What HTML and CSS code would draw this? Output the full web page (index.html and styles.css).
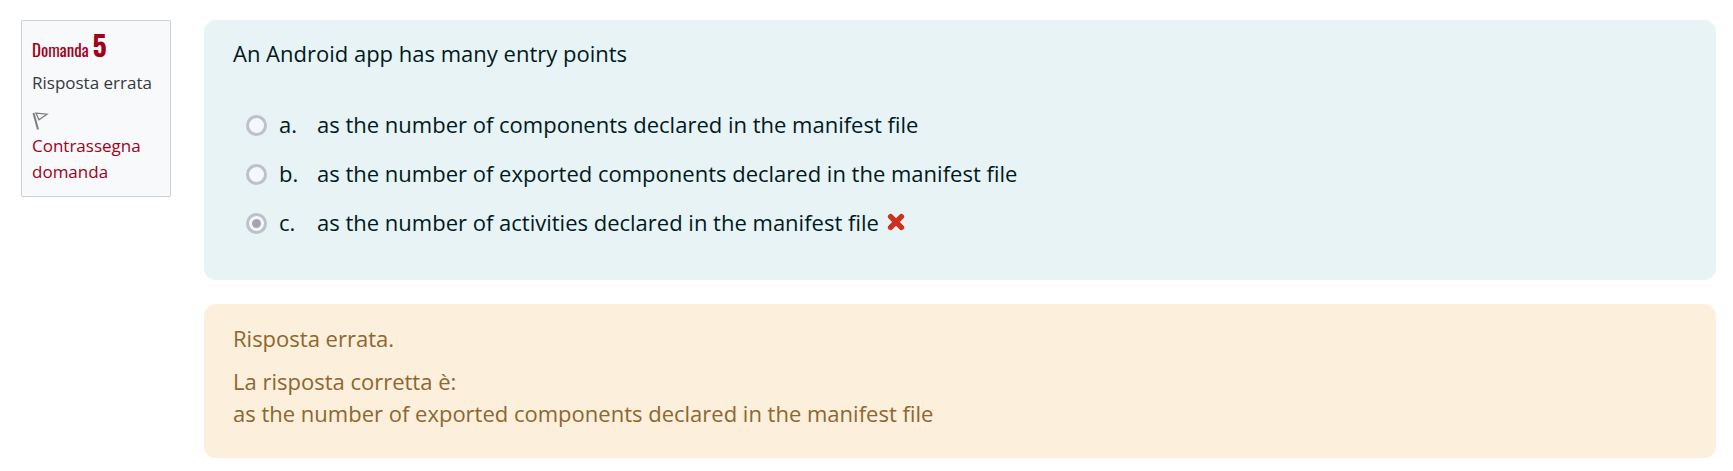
FILE: index.html
```html
<!DOCTYPE html>
<html lang="it">
<head>
<meta charset="utf-8">
<title>Domanda 5</title>
<link rel="stylesheet" href="styles.css">
</head>
<body>
<main class="question">
  <aside class="info">
    <h3 class="info-title">Domanda <span class="info-number">5</span></h3>
    <div class="info-state">Risposta errata</div>
    <a class="info-flag" href="#">
      <svg class="flag-icon" viewBox="0 0 18 18" aria-hidden="true">
        <path d="M1.5 1 L6 17.5" stroke="#7d7d7d" stroke-width="2"/>
        <path d="M4 1.2 L15 2.2 L7 7.8 Z" stroke="#7d7d7d" stroke-width="1.3"/>
      </svg>
      <span>Contrassegna domanda</span>
    </a>
  </aside>
  <div class="content">
    <section class="card formulation">
      <p class="prompt">An Android app has many entry points</p>
      <div class="answers">
        <div class="answer">
          <input class="radio" type="radio" name="answer" id="answer-a" disabled>
          <label class="answer-label" for="answer-a"><span class="letter">a.</span><span>as the number of components declared in the manifest file</span></label>
        </div>
        <div class="answer">
          <input class="radio" type="radio" name="answer" id="answer-b" disabled>
          <label class="answer-label" for="answer-b"><span class="letter">b.</span><span>as the number of exported components declared in the manifest file</span></label>
        </div>
        <div class="answer">
          <input class="radio" type="radio" name="answer" id="answer-c" checked disabled>
          <label class="answer-label" for="answer-c"><span class="letter">c.</span><span>as the number of activities declared in the manifest file</span>
            <svg class="wrong-icon" viewBox="0 0 18 18" aria-hidden="true">
              <path d="M4 4 L14 14 M14 4 L4 14" stroke="#ca3120" stroke-width="4.4" stroke-linecap="square"/>
              <path d="M3.6 3.6 L14.4 14.4 M14.4 3.6 L3.6 14.4" stroke="#ca3120" stroke-width="5.4" stroke-linecap="round"/>
            </svg>
          </label>
        </div>
      </div>
    </section>
    <section class="card feedback">
      <p class="feedback-text">Risposta errata.</p>
      <p class="feedback-text">La risposta corretta è:<br>as the number of exported components declared in the manifest file</p>
    </section>
  </div>
</main>
</body>
</html>
```
FILE: styles.css
```css
* {
  box-sizing: border-box;
}

body {
  margin: 0;
  background: #fff;
  font-family: "Open Sans", sans-serif;
  font-size: 22px;
  line-height: 32px;
}

p,
h3 {
  margin: 0;
}

.question {
  display: flex;
  align-items: flex-start;
  gap: 33px;
  padding: 20px 17px 13px 21px;
}

.info {
  flex: 0 0 150px;
  padding: 8px 10px 11px;
  border: 1px solid #cad0d7;
  border-radius: 2px;
  background: #f8f9fa;
  color: #343a40;
  font-size: 17px;
  line-height: 26px;
}

.info-title {
  color: #a3001a;
  font-family: Oswald, "Open Sans Condensed", "Roboto Condensed", "DejaVu Sans Condensed", sans-serif;
  font-size: 17px;
  font-weight: 400;
  line-height: 31px;
}

.info-number {
  font-size: 28px;
  font-weight: 700;
}

.info-state {
  padding: 5px 0 16px;
}

.info-flag {
  display: flex;
  flex-direction: column;
  gap: 3px;
  color: #a3001a;
  text-decoration: none;
}

.flag-icon {
  width: 18px;
  height: 18px;
  fill: none;
}

.content {
  display: flex;
  flex: 1;
  flex-direction: column;
  gap: 24px;
}

.card {
  padding: 18px 29px;
  border-radius: 12px;
}

.formulation {
  padding: 17px 29px 33px;
  background: #e7f3f5;
  color: #001a1e;
}

.answers {
  padding-top: 31px;
}

.answer {
  display: flex;
  align-items: center;
  gap: 12px;
  padding: 8px 0 9px 13px;
}

.radio {
  display: grid;
  flex: none;
  place-content: center;
  width: 21px;
  height: 21px;
  margin: 2px 0 0;
  border: 3px solid #bdc1ca;
  border-radius: 50%;
  background: #f3f8fc;
  appearance: none;
}

.radio:checked::before {
  width: 9px;
  height: 9px;
  border-radius: 50%;
  background: #a3a5b2;
  content: "";
}

.answer-label {
  display: flex;
  align-items: center;
}

.letter {
  flex: 0 0 38px;
}

.wrong-icon {
  flex: none;
  width: 18px;
  height: 18px;
  margin-left: 8px;
  fill: none;
}

.feedback {
  display: flex;
  flex-direction: column;
  gap: 11px;
  padding-bottom: 29px;
  background: #fcefdc;
  color: #8e662e;
}
```
